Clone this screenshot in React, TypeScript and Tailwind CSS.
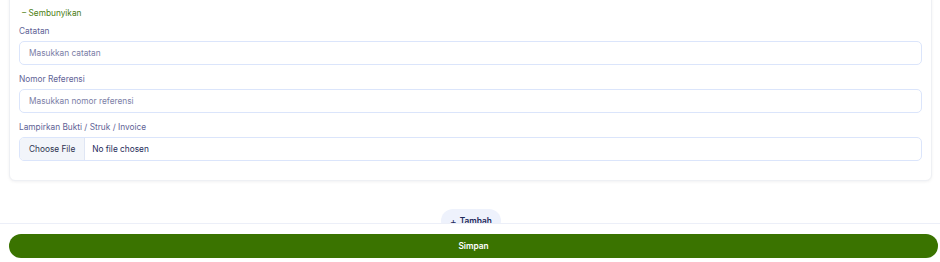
export default function App() {
  return (
    <div className="relative h-[262px] w-[940px] overflow-hidden bg-white font-['Inter',sans-serif]">
      <div className="ml-[9px] mr-[8px] -mt-[10px] rounded-md border border-[#eef0f4] bg-white px-[9px] pb-[19px] pt-[16px] shadow-[0_1px_3px_rgba(15,23,42,0.06)]">
        <button className="ml-[3px] flex h-[12px] items-center text-[8.3px] leading-[12px] text-[#4b7d12]">
          – Sembunyikan
        </button>

        <div className="mt-[6px] flex flex-col gap-[8px]">
          <div>
            <label className="block text-[8.3px] leading-[12px] text-[#5f6396]">Catatan</label>
            <input
              placeholder="Masukkan catatan"
              className="mt-[4px] block h-[24px] w-full rounded-[5px] border border-[#dbe5fb] bg-white px-[9px] text-[8.3px] text-[#1e2a5a] outline-none placeholder:text-[#7b7ea6]"
            />
          </div>
          <div>
            <label className="block text-[8.3px] leading-[12px] text-[#5f6396]">Nomor Referensi</label>
            <input
              placeholder="Masukkan nomor referensi"
              className="mt-[4px] block h-[24px] w-full rounded-[5px] border border-[#dbe5fb] bg-white px-[9px] text-[8.3px] text-[#1e2a5a] outline-none placeholder:text-[#7b7ea6]"
            />
          </div>
          <div>
            <label className="block text-[8.3px] leading-[12px] text-[#5f6396]">Lampirkan Bukti / Struk / Invoice</label>
            <div className="mt-[4px] flex h-[24px] w-full items-stretch overflow-hidden rounded-[5px] border border-[#dbe5fb] bg-white text-[8.3px]">
              <span className="flex items-center border-r border-[#dfe6f4] bg-[#f2f5fa] px-[9px] text-[#2d3350]">Choose File</span>
              <span className="flex items-center pl-[7px] text-[#1e2a5a]">No file chosen</span>
            </div>
          </div>
        </div>
      </div>

      <div className="mt-[28px] flex justify-center">
        <button className="ml-[2px] flex h-[24px] w-[60px] items-center justify-center gap-[3px] rounded-full bg-[#eef2fc] text-[8.3px] font-semibold text-[#1e2a5a]">
          <span className="text-[10px] font-normal leading-none">+</span>
          Tambah
        </button>
      </div>

      <div className="absolute inset-x-0 bottom-0 h-[39px] border-t border-[#eceff8] bg-white pt-[10px]">
        <button className="ml-[9px] mr-[2px] flex h-[24px] w-[929px] items-center justify-center rounded-full bg-[#3a7300] text-[8.3px] font-semibold text-white">
          Simpan
        </button>
      </div>
    </div>
  );
}
